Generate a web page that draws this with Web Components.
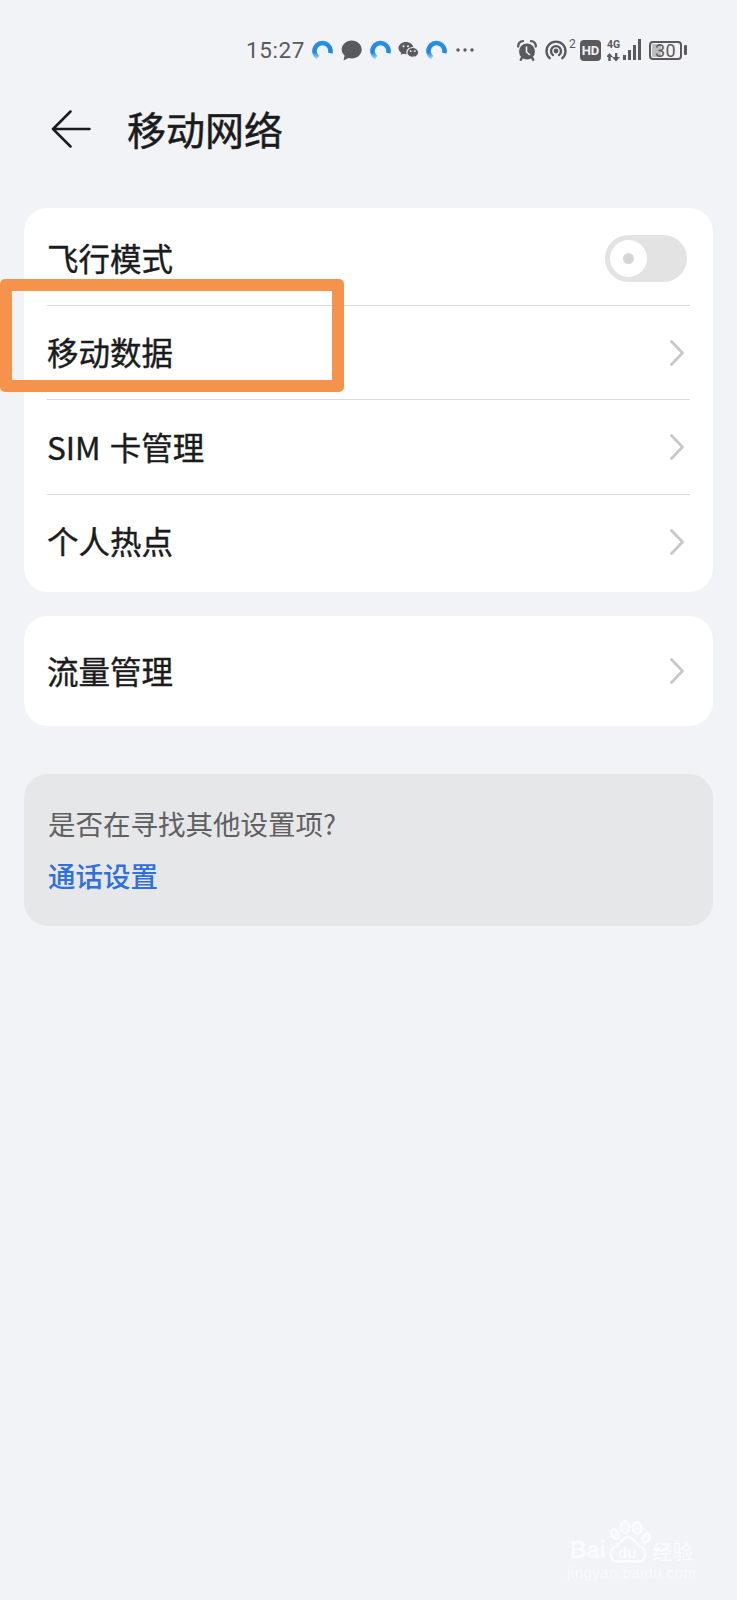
<!DOCTYPE html>
<html lang="zh">
<head>
<meta charset="utf-8">
<title>移动网络</title>
<style>
  html, body { margin: 0; padding: 0; }
  body {
    width: 737px;
    height: 1600px;
    position: relative;
    overflow: hidden;
    background: #f1f3f7;
    font-family: "Noto Sans CJK SC", "Noto Sans", sans-serif;
  }
  settings-card { margin: 0 24px; }
  settings-card + settings-card { margin-top: 24px; }
  tip-card { margin: 48px 24px 0; }
</style>
</head>
<body>
  <status-bar></status-bar>
  <title-bar>移动网络</title-bar>

  <settings-card>
    <setting-row toggle>飞行模式</setting-row>
    <setting-row>移动数据</setting-row>
    <setting-row style="height:95px">SIM 卡管理</setting-row>
    <setting-row last style="height:93px">个人热点</setting-row>
  </settings-card>

  <settings-card>
    <setting-row last style="height:102px">流量管理</setting-row>
  </settings-card>

  <tip-card link="通话设置">是否在寻找其他设置项?</tip-card>

  <highlight-box></highlight-box>
  <baidu-mark></baidu-mark>

<script>
const spinner = (id) => `
  <svg width="21" height="21" viewBox="0 0 21 21" fill="none">
    <defs><linearGradient id="${id}" gradientUnits="userSpaceOnUse" x1="0" y1="1" x2="0" y2="21">
      <stop offset="0" stop-color="#2a90e6"/><stop offset=".58" stop-color="#1f88e2"/><stop offset=".78" stop-color="#7fbef0"/><stop offset="1" stop-color="#eaf4fc"/>
    </linearGradient></defs>
    <path d="M6.100 17.700A8 8 0 1 1 18.200 13.200" stroke="url(#${id})" stroke-width="4.600"/>
  </svg>`;

const statusTemplate = document.createElement('template');
statusTemplate.innerHTML = `
  <style>
    :host {
      display: flex;
      align-items: center;
      height: 80px;
      padding: 20px 50px 0 246px;
      box-sizing: border-box;
      color: #5a5a5c;
      font-family: "Roboto", sans-serif;
    }
    .group { display: flex; align-items: center; }
    .time { width: 66px; font-size: 22.500px; letter-spacing: .6px; white-space: nowrap; }
    .right { margin-left: auto; }
    svg { display: block; flex: none; }
    .hd {
      width: 21px; height: 21px; border-radius: 4px; background: #5a5a5c; color: #f1f3f7;
      font-size: 13px; font-weight: 700; text-align: center; line-height: 21px; margin-right: 6px;
    }
    .sup { font-size: 12px; align-self: flex-start; margin: 0 5px 0 2px; line-height: 12px; width: 6px; }
    .hot { display: flex; height: 24px; align-items: center; }
    .net { position: relative; width: 34px; height: 24px; margin-right: 8px; }
    .net span {
      position: absolute; left: 0; top: 1px; font-size: 10.500px; font-weight: 700; line-height: 11px;
    }
    .net svg { position: absolute; left: 0; top: 0; }
    .batt {
      position: relative; width: 33px; height: 19px; border: 2px solid #5a5a5c; border-radius: 4px;
      box-sizing: border-box; font-size: 18px; line-height: 15px; text-align: center; letter-spacing: .5px;
    }
    .batt i { position: absolute; left: 1px; top: 1px; bottom: 1px; width: 9px; background: #bcbdbe; }
    .batt span { position: relative; }
    .cap { width: 3px; height: 10px; background: #5a5a5c; border-radius: 1px; margin-left: 2px; }
  </style>
  <div class="group">
    <span class="time">15:27</span>
    ${spinner('s1')}
    <svg style="margin:0 8px 0 8px" width="21" height="21" viewBox="0 0 21 21" fill="#5a5a5c">
      <path d="M10.700 .5C16.200 .5 20.700 4.500 20.700 9.500S16.200 18.500 10.700 18.500C9.600 18.500 8.600 18.300 7.600 18L2.500 20.500 3.600 15.500C1.700 13.900 .7 11.800 .7 9.500 .7 4.500 5.200 .5 10.700 .5Z"/>
    </svg>
    ${spinner('s2')}
    <svg style="margin:0 7px 0 7px" width="21" height="21" viewBox="0 0 21 21">
      <path fill="#5a5a5c" d="M8 2C3.900 2 .5 4.700 .5 8.100 .5 10 1.600 11.700 3.300 12.900L2.600 15 5 13.700C6 14 6.900 14.200 8 14.200 12.100 14.200 15.500 11.500 15.500 8.100S12.100 2 8 2Z"/>
      <path fill="#5a5a5c" stroke="#f1f3f7" stroke-width="1.200" d="M14.700 7.500C11.400 7.500 8.800 9.700 8.800 12.400S11.400 17.300 14.700 17.300C15.500 17.300 16.300 17.100 17 16.900L19 18 18.500 16.200C19.900 15.300 20.800 13.900 20.800 12.400 20.800 9.700 18 7.500 14.700 7.500Z"/>
      <g fill="#f1f3f7"><circle cx="5.500" cy="6.300" r="1"/><circle cx="10" cy="6.300" r="1"/><circle cx="12.700" cy="11.200" r=".9"/><circle cx="16.800" cy="11.200" r=".9"/></g>
    </svg>
    ${spinner('s3')}
    <svg style="margin-left:9px" width="18" height="4" viewBox="0 0 18 4" fill="#5a5a5c">
      <circle cx="2" cy="2" r="1.700"/><circle cx="9" cy="2" r="1.700"/><circle cx="16" cy="2" r="1.700"/>
    </svg>
  </div>
  <div class="group right">
    <svg style="margin-right:8px" width="20" height="21" viewBox="0 0 20 21">
      <circle cx="10" cy="11.500" r="8" fill="#5a5a5c"/>
      <path d="M1.200 6.500C1 3.500 3 1.200 6 1.200M18.800 6.500C19 3.500 17 1.200 14 1.200" fill="none" stroke="#5a5a5c" stroke-width="2.300" stroke-linecap="round"/>
      <path d="M5 17.500 3.800 19.800M15 17.500 16.200 19.800" stroke="#5a5a5c" stroke-width="2.400" stroke-linecap="round"/>
      <path d="M9.500 6.500V12L13 15" fill="none" stroke="#f1f3f7" stroke-width="1.600"/>
    </svg>
    <div class="hot">
      <svg width="22" height="21" viewBox="0 0 22 21" fill="none" stroke="#5a5a5c" stroke-width="2.400" stroke-linecap="round">
        <path d="M4.700 18.200A9.500 9.500 0 1 1 17.300 18.200"/>
        <path d="M8 15.100A5 5 0 1 1 14 15.100"/>
        <circle cx="11" cy="11" r="1.200" fill="#5a5a5c"/>
      </svg>
      <span class="sup">2</span>
    </div>
    <span class="hd">HD</span>
    <div class="net">
      <span>4G</span>
      <svg width="34" height="24" viewBox="0 0 34 24" fill="#5a5a5c">
        <path d="M2.500 15 6 19H3.700V23H1.300V19H-1ZM8 15H10.400V19H13L9 23.500 5 19H8Z"/>
        <path d="M16 17H19V22H16ZM21 12H24V22H21ZM26 7H29V22H26ZM31 1H34V22H31Z"/>
      </svg>
    </div>
    <div class="batt"><i></i><span>30</span></div>
    <div class="cap"></div>
  </div>
`;

class StatusBar extends HTMLElement {
  constructor() {
    super();
    this.attachShadow({ mode: 'open' }).appendChild(statusTemplate.content.cloneNode(true));
  }
}

const titleTemplate = document.createElement('template');
titleTemplate.innerHTML = `
  <style>
    :host {
      display: flex;
      align-items: center;
      height: 98px;
      margin-bottom: 30px;
      padding-left: 51px;
      box-sizing: border-box;
      color: #1b1b1d;
    }
    svg { display: block; margin-right: 36px; }
    .title { font-size: 39px; font-weight: 400; -webkit-text-stroke: .5px #1b1b1d; line-height: 56px; padding-bottom: 2px; }
  </style>
  <svg width="40" height="38" viewBox="0 0 40 38" fill="none" stroke="#1b1b1d" stroke-width="2.500" stroke-linecap="round" stroke-linejoin="round">
    <path d="M38.500 19H2M19.500 1.500 2 19 19.500 36.500"/>
  </svg>
  <span class="title"><slot></slot></span>
`;

class TitleBar extends HTMLElement {
  constructor() {
    super();
    this.attachShadow({ mode: 'open' }).appendChild(titleTemplate.content.cloneNode(true));
  }
}

const cardTemplate = document.createElement('template');
cardTemplate.innerHTML = `
  <style>
    :host {
      display: block;
      padding: 4px 23px;
      background: #fff;
      border-radius: 24px;
    }
  </style>
  <slot></slot>
`;

class SettingsCard extends HTMLElement {
  constructor() {
    super();
    this.attachShadow({ mode: 'open' }).appendChild(cardTemplate.content.cloneNode(true));
  }
}

const rowTemplate = document.createElement('template');
rowTemplate.innerHTML = `
  <style>
    :host {
      display: flex;
      align-items: center;
      justify-content: space-between;
      height: 94px;
      box-sizing: border-box;
      border-bottom: 1px solid #d9dadb;
      font-size: 31.500px;
      color: #1b1b1d;
    }
    :host([last]) { border-bottom: 0; }
    .label { padding-bottom: 3px; word-spacing: 2px; -webkit-text-stroke: .4px #1b1b1d; }
    .chev { display: block; margin-right: 6px; }
    .toggle {
      display: flex; align-items: center;
      width: 82px; height: 47px; margin-right: 3px; padding-left: 5px; box-sizing: border-box;
      border-radius: 24px; background: #e3e3e4;
    }
    .knob {
      display: flex; align-items: center; justify-content: center;
      width: 37px; height: 37px; border-radius: 50%; background: #fff;
    }
    .knob i { width: 11px; height: 11px; border-radius: 50%; background: #d6d6d7; }
  </style>
  <span class="label"><slot></slot></span>
  <span class="end"></span>
`;

class SettingRow extends HTMLElement {
  constructor() {
    super();
    this.attachShadow({ mode: 'open' }).appendChild(rowTemplate.content.cloneNode(true));
    this.$end = this.shadowRoot.querySelector('.end');
  }

  connectedCallback() {
    if (this.hasAttribute('toggle')) {
      this.$end.innerHTML = '<div class="toggle"><div class="knob"><i></i></div></div>';
    } else {
      this.$end.innerHTML = `<svg class="chev" width="14" height="26" viewBox="0 0 14 26" fill="none" stroke="#c8c8ca" stroke-width="2.800" stroke-linecap="round" stroke-linejoin="round"><path d="M1.500 1.500 12.500 13 1.500 24.500"/></svg>`;
    }
  }
}

const tipTemplate = document.createElement('template');
tipTemplate.innerHTML = `
  <style>
    :host {
      display: block;
      height: 152px;
      padding: 29px 24px 0;
      box-sizing: border-box;
      background: #e6e7e9;
      border-radius: 24px;
      font-size: 27.500px;
      line-height: 40px;
      color: #606062;
    }
    .link { margin-top: 12px; font-weight: 500; color: #2f6fde; }
  </style>
  <div><slot></slot></div>
  <div class="link"></div>
`;

class TipCard extends HTMLElement {
  constructor() {
    super();
    this.attachShadow({ mode: 'open' }).appendChild(tipTemplate.content.cloneNode(true));
  }

  connectedCallback() {
    this.shadowRoot.querySelector('.link').textContent = this.getAttribute('link');
  }
}

const boxTemplate = document.createElement('template');
boxTemplate.innerHTML = `
  <style>
    :host {
      position: absolute;
      left: 0; top: 279px;
      width: 344px; height: 113px;
      box-sizing: border-box;
      border: 12px solid #f5924b;
      border-radius: 5px;
    }
  </style>
`;

class HighlightBox extends HTMLElement {
  constructor() {
    super();
    this.attachShadow({ mode: 'open' }).appendChild(boxTemplate.content.cloneNode(true));
  }
}

const markTemplate = document.createElement('template');
markTemplate.innerHTML = `
  <style>
    :host {
      position: absolute;
      left: 565px; top: 1520px;
      width: 136px; height: 64px;
      color: #fff;
      font-family: "Liberation Sans", sans-serif;
    }
    svg { position: absolute; left: 42px; top: 0; opacity: .8; }
    span { position: absolute; white-space: nowrap; }
    .bai { left: 5px; top: 17px; font-size: 23px; font-weight: 700; line-height: 26px; opacity: .7; }
    .du { left: 53px; top: 24px; font-size: 15px; font-weight: 700; line-height: 18px; opacity: .75; }
    .jy { left: 87px; top: 17px; font-size: 20.500px; line-height: 28px; font-family: "Noto Sans CJK SC", sans-serif; opacity: .75; }
    .url { left: 2px; top: 44px; font-size: 15px; line-height: 18px; letter-spacing: .5px; opacity: .6; }
  </style>
  <svg width="50" height="46" viewBox="0 0 50 46" fill="#f7f8fb" stroke="#fff" stroke-width="2">
    <ellipse cx="8" cy="14" rx="3.500" ry="5" transform="rotate(-25 8 14)"/>
    <ellipse cx="18" cy="7" rx="4.500" ry="6"/>
    <ellipse cx="30" cy="8" rx="4.500" ry="6"/>
    <ellipse cx="39" cy="18" rx="3.500" ry="5" transform="rotate(25 39 18)"/>
    <path d="M21 17C27 17 28 24 34 27 41 31 39 42 31 41.500 26 41 16 41 11 41.500 3 42 1 31 8 27 14 24 15 17 21 17Z" fill="none" stroke-width="2.500"/>
  </svg>
  <span class="bai">Bai</span>
  <span class="du">du</span>
  <span class="jy">经验</span>
  <span class="url">jingyan.baidu.com</span>
`;

class BaiduMark extends HTMLElement {
  constructor() {
    super();
    this.attachShadow({ mode: 'open' }).appendChild(markTemplate.content.cloneNode(true));
  }
}

customElements.define('status-bar', StatusBar);
customElements.define('title-bar', TitleBar);
customElements.define('settings-card', SettingsCard);
customElements.define('setting-row', SettingRow);
customElements.define('tip-card', TipCard);
customElements.define('highlight-box', HighlightBox);
customElements.define('baidu-mark', BaiduMark);
</script>
</body>
</html>
